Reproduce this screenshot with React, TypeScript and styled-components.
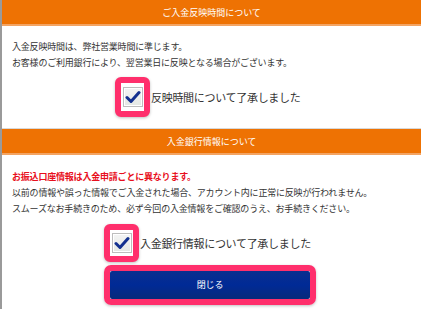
import styled, { createGlobalStyle } from "styled-components";

const Global = createGlobalStyle`
  html, body {
    margin: 0;
    padding: 0;
    background: #fff;
  }
  body {
    font-family: "Noto Sans CJK JP", "Noto Sans", sans-serif;
    color: #333;
  }
`;

const Modal = styled.div`
  width: 421px;
  height: 309px;
  overflow: hidden;
  border-left: 2px solid #9a9a9a;
  box-sizing: border-box;
  background: #fff;
`;

const Header = styled.div<{ $top?: boolean }>`
  height: 24px;
  background: #ee7203;
  border-bottom: 2px solid #f3a463;
  border-top: ${(p) => (p.$top ? "1px solid #d8d8d8" : "none")};
  color: #fff;
  font-size: 9px;
  display: flex;
  align-items: center;
  justify-content: center;
`;

const Body = styled.div<{ $pad: number }>`
  padding: ${(p) => p.$pad}px 10px 0;
  font-size: 9px;
  letter-spacing: -0.2px;
  line-height: 16px;
`;

const Line = styled.p`
  margin: 0;
  white-space: nowrap;
`;

const Warn = styled(Line)`
  color: #e8101d;
  font-weight: bold;
`;

const CheckRow = styled.label<{ $offset: number; $gap: number }>`
  display: flex;
  align-items: center;
  margin-left: ${(p) => p.$offset}px;
  margin-top: ${(p) => p.$gap}px;
  font-size: 11px;
  letter-spacing: -0.3px;
  color: #333;
`;

const Highlight = styled.span<{ $h: number }>`
  display: flex;
  align-items: center;
  justify-content: center;
  width: 35px;
  height: ${(p) => p.$h}px;
  box-sizing: border-box;
  border: 6px solid #ff2f6c;
  border-radius: 6px;
  background: #fff;
  box-shadow: 0 1px 3px rgba(0, 0, 0, 0.25);
  margin-right: 1px;
`;

const Box = styled.span`
  display: flex;
  align-items: center;
  justify-content: center;
  width: 20px;
  height: 20px;
  box-sizing: border-box;
  border: 1px solid #bdbdbd;
  background: linear-gradient(#f4f4f4, #e4e8e4);
  box-shadow: inset 0 0 0 1px #fff;
`;

const Spacer = styled.div`
  height: 11px;
`;

const Button = styled.div`
  margin: 3px 0 0 92px;
  width: 212px;
  height: 40px;
  box-sizing: border-box;
  border: 6px solid #ff2f6c;
  border-radius: 7px;
  box-shadow: 0 1px 3px rgba(0, 0, 0, 0.25);
  display: flex;
`;

const ButtonInner = styled.div`
  flex: 1;
  background: linear-gradient(#0a2f8f, #002a96 50%, #082a7a);
  border-radius: 2px;
  color: #fff;
  font-size: 9px;
  display: flex;
  align-items: center;
  justify-content: center;
`;

const Check = ({ h }: { h: number }) => (
  <Highlight $h={h}>
    <Box>
      <svg width="16" height="14" viewBox="0 0 16 14">
        <path d="M2 7.5 L6 11.5 L14 2.5" fill="none" stroke="#13308f" strokeWidth="3" strokeLinecap="round" strokeLinejoin="round" />
      </svg>
    </Box>
  </Highlight>
);

export default function App() {
  return (
    <>
      <Global />
      <Modal>
        <Header>ご入金反映時間について</Header>
        <Body $pad={13}>
          <Line>入金反映時間は、弊社営業時間に準じます。</Line>
          <Line>お客様のご利用銀行により、翌営業日に反映となる場合がございます。</Line>
          <CheckRow $offset={103} $gap={6}>
            <Check h={40} />
            反映時間について了承しました
          </CheckRow>
        </Body>
        <Spacer />
        <Header $top>入金銀行情報について</Header>
        <Body $pad={14}>
          <Warn>お振込口座情報は入金申請ごとに異なります。</Warn>
          <Line>以前の情報や誤った情報でご入金された場合、アカウント内に正常に反映が行われません。</Line>
          <Line>スムーズなお手続きのため、必ず今回の入金情報をご確認のうえ、お手続きください。</Line>
          <CheckRow $offset={92} $gap={7}>
            <Check h={38} />
            入金銀行情報について了承しました
          </CheckRow>
          <Button>
            <ButtonInner>閉じる</ButtonInner>
          </Button>
        </Body>
      </Modal>
    </>
  );
}
